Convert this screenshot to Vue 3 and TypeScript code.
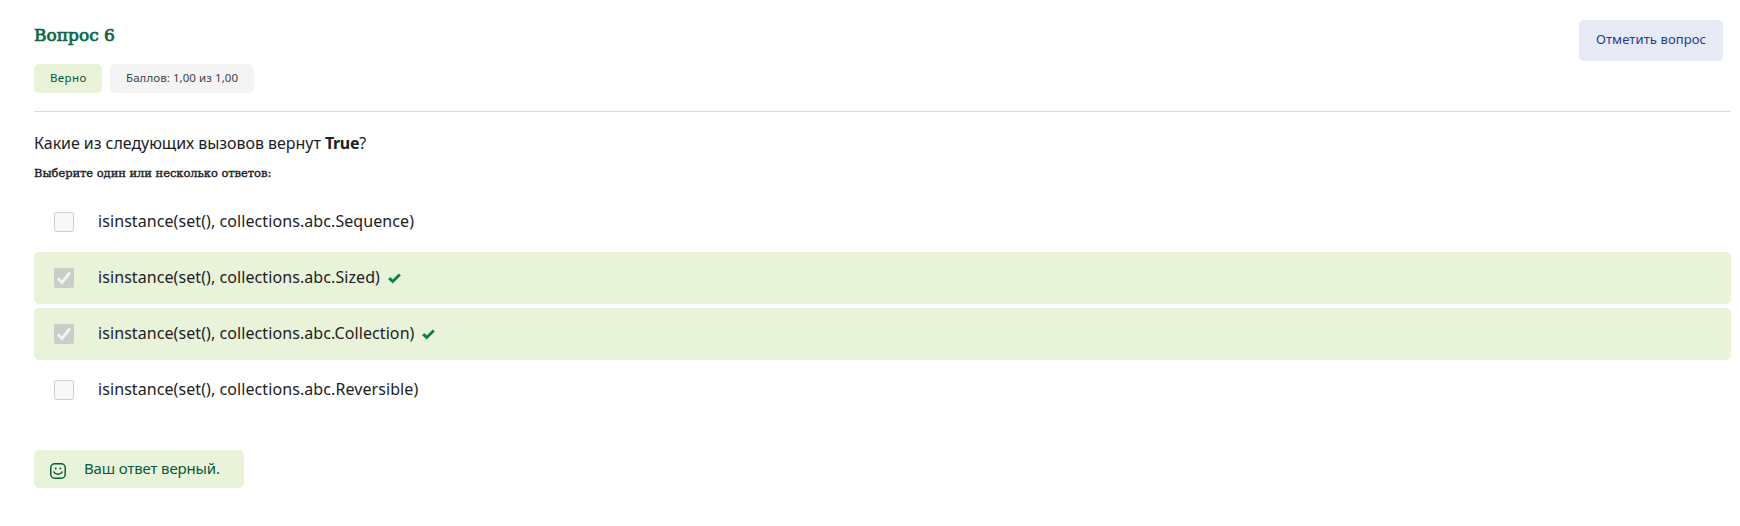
<script setup lang="ts">
interface Answer {
  text: string
  checked: boolean
}

const answers: Answer[] = [
  { text: 'isinstance(set(), collections.abc.Sequence)', checked: false },
  { text: 'isinstance(set(), collections.abc.Sized)', checked: true },
  { text: 'isinstance(set(), collections.abc.Collection)', checked: true },
  { text: 'isinstance(set(), collections.abc.Reversible)', checked: false },
]
</script>

<template>
  <main class="question">
    <header class="head">
      <div class="info">
        <h3 class="title">Вопрос 6</h3>
        <div class="badges">
          <div class="badge correct">Верно</div>
          <div class="badge grade">Баллов: 1,00 из 1,00</div>
        </div>
      </div>
      <button class="flag" type="button">Отметить вопрос</button>
    </header>
    <p class="text">Какие из следующих вызовов вернут <b>True</b>?</p>
    <p class="prompt">Выберите один или несколько ответов:</p>
    <div class="answers">
      <div v-for="a in answers" :key="a.text" class="answer" :class="{ right: a.checked }">
        <div class="box" :class="{ on: a.checked }">
          <svg v-if="a.checked" viewBox="0 0 20 20"><path d="M4 10.300 8 14.500 16 4.500" /></svg>
        </div>
        <span class="label">{{ a.text }}</span>
        <svg v-if="a.checked" class="tick" viewBox="0 0 13 11">
          <path d="M1.200 5.100 4.700 8.500 11.800 1.500" />
        </svg>
      </div>
    </div>
    <div class="feedback">
      <svg class="smile" viewBox="0 0 16 16">
        <rect x=".75" y=".75" width="14.500" height="14.500" rx="4" />
        <path d="M3.500 8.500c1.900 3.500 7.100 3.500 9 0" />
        <circle cx="5.700" cy="5.500" r=".9" /><circle cx="10.300" cy="5.500" r=".9" />
      </svg>
      <span class="verdict">Ваш ответ верный.</span>
    </div>
  </main>
</template>

<style>
body {
  background: #fff;
}
</style>

<style scoped>
.question {
  box-sizing: border-box;
  width: 1740px;
  height: 526px;
  padding: 20px 9px 0 34px;
  overflow: hidden;
  font-family: 'Noto Sans', sans-serif;
  font-size: 16px;
  color: #1d2125;
  white-space: nowrap;
}
.head {
  box-sizing: border-box;
  height: 92px;
  display: flex;
  justify-content: space-between;
  align-items: flex-start;
  padding-right: 8px;
  border-bottom: 1px solid #dcdcdc;
}
.title {
  margin: 0;
  height: 44px;
  font: normal 17px/30px 'DejaVu Serif', serif;
  -webkit-text-stroke: 0.7px currentColor;
  color: #0a6640;
}
.badges {
  display: flex;
  gap: 8px;
}
.badge {
  box-sizing: border-box;
  height: 29px;
  padding-left: 16px;
  border-radius: 5px;
  font-size: 11.5px;
  line-height: 28px;
}
.correct {
  width: 68px;
  background: #e8f3da;
  color: #0a5a3c;
  letter-spacing: 0.4px;
}
.grade {
  width: 144px;
  background: #f4f4f4;
  color: #3f4247;
  letter-spacing: 0.07px;
}
.flag {
  width: 144px;
  height: 41px;
  padding: 0 0 2px;
  border: 0;
  border-radius: 5px;
  background: #e6eaf5;
  color: #1c3c8c;
  font: 13px/37px 'Noto Sans', sans-serif;
  letter-spacing: 0.1px;
}
.text {
  margin: 0;
  padding: 19px 0 1px;
  line-height: 24px;
  letter-spacing: -0.05px;
}
.text b {
  letter-spacing: -0.3px;
}
.prompt {
  margin: 0;
  padding-top: 6px;
  height: 34px;
  box-sizing: border-box;
  font: normal 11.5px/22px 'DejaVu Serif', serif;
  letter-spacing: -0.05px;
  -webkit-text-stroke: 0.4px currentColor;
}
.answers {
  display: flex;
  flex-direction: column;
  gap: 4px;
  padding-top: 6px;
}
.answer {
  box-sizing: border-box;
  height: 52px;
  display: flex;
  align-items: center;
  padding-left: 20px;
  border-radius: 5px;
}
.label {
  padding-bottom: 2px;
  letter-spacing: 0.08px;
}
.right {
  background: #e8f3da;
}
.box {
  box-sizing: border-box;
  width: 20px;
  height: 20px;
  margin-right: 24px;
  border: 1px solid #cfcfcf;
  border-radius: 2px;
  background: #f8f8f8;
}
.box.on {
  border: 0;
  background: #cacdc7;
}
.box svg {
  display: block;
  fill: none;
  stroke: #f0f4ec;
  stroke-width: 3;
}
.tick {
  width: 13px;
  height: 11px;
  margin-left: 8px;
  fill: none;
  stroke: #0b8047;
  stroke-width: 2.9;
}
.feedback {
  box-sizing: border-box;
  display: flex;
  align-items: center;
  width: 210px;
  height: 38px;
  margin-top: 34px;
  padding-left: 16px;
  border-radius: 5px;
  background: #e8f3da;
  color: #0a5a3c;
  font-size: 15px;
}
.verdict {
  padding-bottom: 2px;
  letter-spacing: -0.15px;
}
.smile {
  width: 16px;
  height: 16px;
  margin: 4px 18px 0 0;
  fill: none;
  stroke: currentColor;
  stroke-width: 1.5;
}
.smile circle {
  fill: currentColor;
  stroke: none;
}
</style>
